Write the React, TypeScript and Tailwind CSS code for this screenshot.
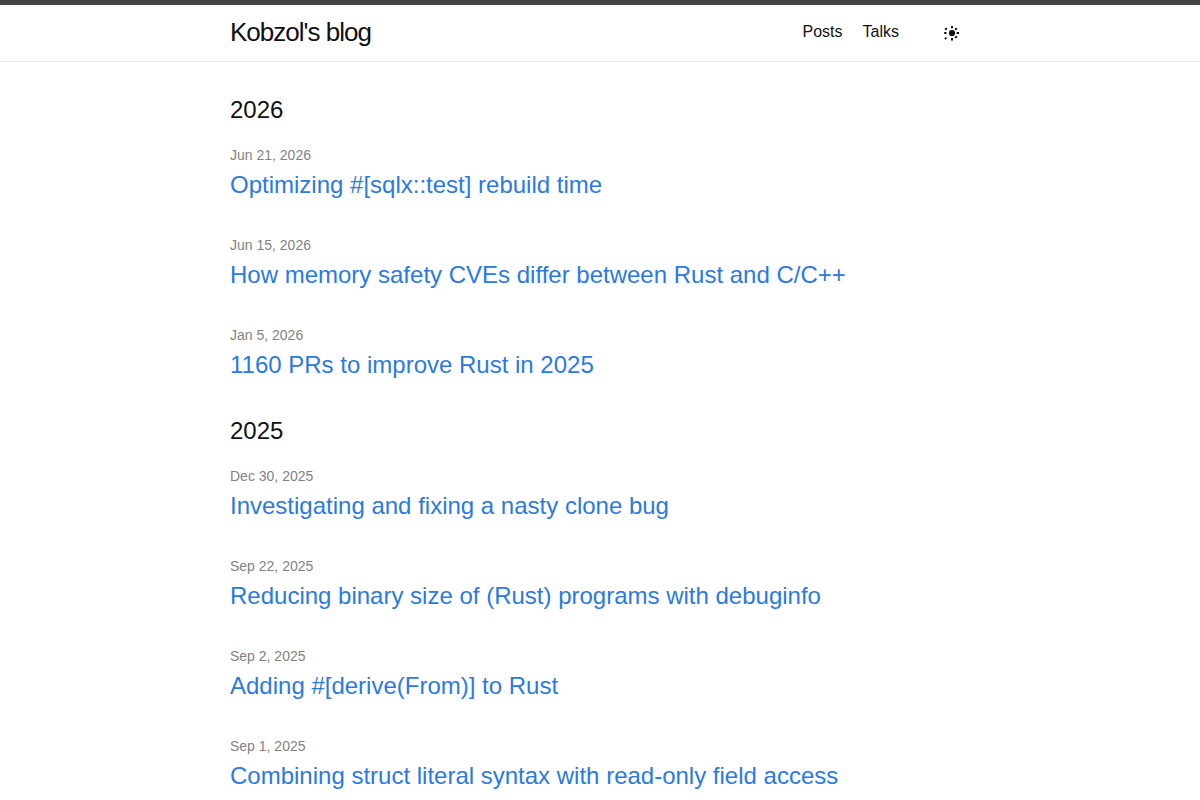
const years = [
  {
    year: "2026",
    posts: [
      { date: "Jun 21, 2026", title: "Optimizing #[sqlx::test] rebuild time" },
      { date: "Jun 15, 2026", title: "How memory safety CVEs differ between Rust and C/C++" },
      { date: "Jan 5, 2026", title: "1160 PRs to improve Rust in 2025" },
    ],
  },
  {
    year: "2025",
    posts: [
      { date: "Dec 30, 2025", title: "Investigating and fixing a nasty clone bug" },
      { date: "Sep 22, 2025", title: "Reducing binary size of (Rust) programs with debuginfo" },
      { date: "Sep 2, 2025", title: "Adding #[derive(From)] to Rust" },
      { date: "Sep 1, 2025", title: "Combining struct literal syntax with read-only field access" },
    ],
  },
];

function SunIcon() {
  return (
    <svg viewBox="0 0 16 16" className="size-4" fill="currentColor" stroke="currentColor" aria-hidden="true">
      <circle cx="8" cy="8" r="3.100" stroke="none" />
      <path
        d="M8 1v2.200M8 13v2.500M.2 8h2.300M12.700 8h2.300M1.200 4.700l1.600-1.600M11.200 4.700l1.600-1.600M1 12.700l1.300 1.300M11.200 12.900l1.600-1.600"
        strokeWidth="2"
      />
    </svg>
  );
}

export default function App() {
  return (
    <div className="min-h-screen bg-white font-['Liberation_Sans',Arial,sans-serif] text-base text-[#111111]">
      <header className="border-t-5 border-b border-t-[#424242] border-b-[#e8e8e8]">
        <div className="mx-auto flex h-14 max-w-[800px] items-start justify-between px-[30px]">
          <a href="#" className="text-[26px] leading-[54px] tracking-[-1px]">Kobzol's blog</a>
          <nav className="flex items-start">
            <a href="#posts" className="mr-5 leading-[54px]">Posts</a>
            <a href="#talks" className="leading-[54px]">Talks</a>
            <button type="button" aria-label="Toggle theme" className="mr-2.5 ml-[45px] flex h-14 items-center">
              <SunIcon />
            </button>
          </nav>
        </div>
      </header>
      <main id="posts" className="mx-auto max-w-[800px] px-[30px] pt-[30px]">
        {years.map(({ year, posts }) => (
          <section key={year}>
            <h2 className="mb-[15px] text-2xl leading-9">{year}</h2>
            <ul>
              {posts.map(({ date, title }) => (
                <li key={title} className="mb-[30px]">
                  <time className="block text-sm leading-6 text-[#828282]">{date}</time>
                  <h3 className="text-2xl leading-9">
                    <a href="#" className="text-[#2a7ae2]">{title}</a>
                  </h3>
                </li>
              ))}
            </ul>
          </section>
        ))}
      </main>
    </div>
  );
}
